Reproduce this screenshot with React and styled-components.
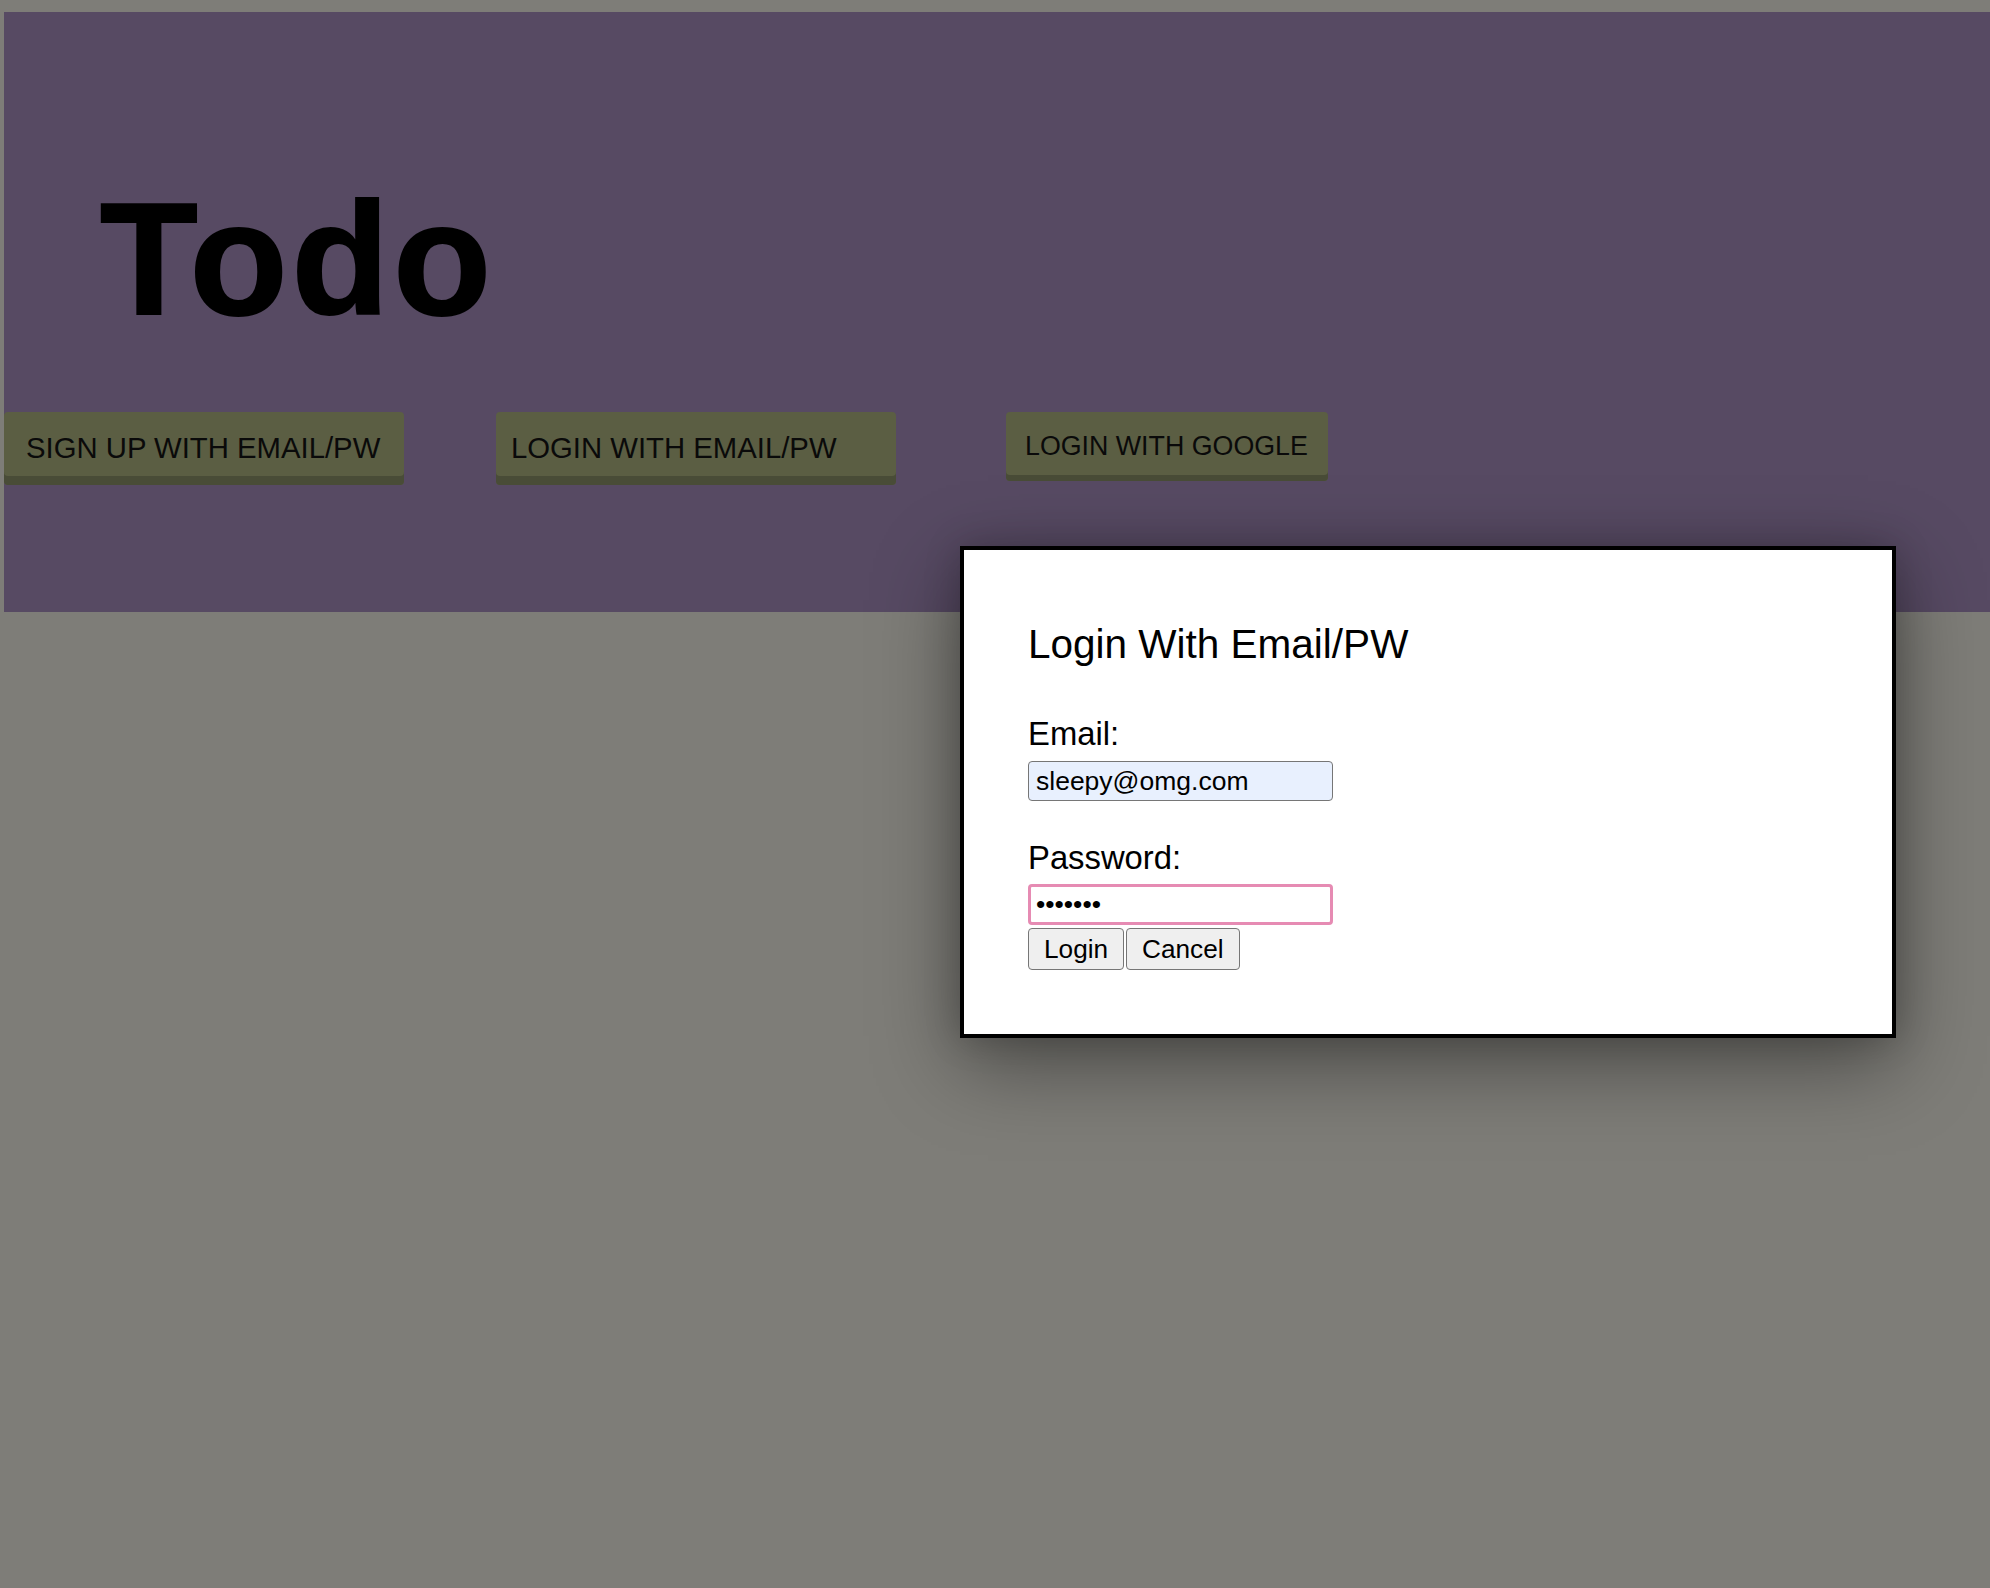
import React from "react";
import styled, { createGlobalStyle } from "styled-components";

const GlobalStyle = createGlobalStyle`
  html, body {
    margin: 0;
    padding: 0;
    background: #7e7d78;
    font-family: "Liberation Sans", Arial, sans-serif;
  }
  #root {
    min-height: 1588px;
  }
`;

const Page = styled.div`
  position: relative;
  min-height: 1588px;
  padding: 12px 0 0 4px;
  box-sizing: border-box;
  background: #7e7d78;
`;

const Header = styled.header`
  background: #574a63;
  height: 600px;
  box-sizing: border-box;
  padding-top: 155px;
  display: flex;
  flex-direction: column;
`;

const Title = styled.h1`
  margin: 0 0 0 96px;
  font-family: "Liberation Sans", Arial, sans-serif;
  font-weight: 700;
  font-size: 160px;
  line-height: 184px;
  letter-spacing: 4px;
  -webkit-text-stroke: 2px #000;
  color: #000;
`;

const ButtonRow = styled.div`
  display: flex;
  align-items: flex-start;
  gap: 92px;
  margin-top: 61px;
`;

const HeaderButton = styled.button`
  box-sizing: border-box;
  width: ${(p) => p.$width}px;
  height: ${(p) => p.$height}px;
  margin-left: ${(p) => p.$offset || 0}px;
  padding: ${(p) => p.$padTop}px 0 ${(p) => p.$lip}px ${(p) => p.$padLeft}px;
  border: none;
  border-radius: 4px;
  background: #5b5e43;
  box-shadow: inset 0 -${(p) => p.$lip}px 0 #494c37;
  font-family: "Liberation Sans", Arial, sans-serif;
  font-size: ${(p) => p.$size}px;
  line-height: ${(p) => p.$size}px;
  text-align: left;
  color: #0a0a0a;
  cursor: pointer;
  display: flex;
  align-items: center;
  white-space: nowrap;
`;

const Modal = styled.div`
  position: absolute;
  left: 960px;
  top: 546px;
  width: 936px;
  box-sizing: border-box;
  background: #fff;
  border: 4px solid #000;
  padding: 71px 64px 64px 64px;
  box-shadow: 0 26px 80px rgba(0, 0, 0, 0.42), 0 0 34px rgba(0, 0, 0, 0.18);
  display: flex;
  flex-direction: column;
  align-items: flex-start;
`;

const ModalTitle = styled.h2`
  margin: 0;
  font-family: "Liberation Sans", Arial, sans-serif;
  font-weight: 400;
  font-size: 40.5px;
  line-height: 46px;
  color: #000;
`;

const Label = styled.label`
  display: block;
  margin-top: ${(p) => p.$top}px;
  font-size: 32.8px;
  line-height: 37px;
  color: #000;
`;

const TextInput = styled.input`
  box-sizing: border-box;
  display: block;
  width: 305px;
  height: ${(p) => (p.$focused ? 41 : 40)}px;
  margin-top: ${(p) => p.$top}px;
  padding: 0 0 0 ${(p) => (p.$focused ? 5 : 7)}px;
  border: ${(p) => (p.$focused ? "3px solid #e68bb3" : "1.5px solid #767676")};
  border-radius: 4px;
  background: ${(p) => (p.$focused ? "#fff" : "#e8f0fe")};
  font-family: "Liberation Sans", Arial, sans-serif;
  font-size: 26.5px;
  color: #000;
  outline: none;
`;

const Actions = styled.div`
  display: flex;
  gap: 2px;
  margin-top: 3px;
`;

const FormButton = styled.button`
  box-sizing: border-box;
  height: 42px;
  padding: 0 15px;
  border: 1.5px solid #767676;
  border-radius: 4px;
  background: #efefef;
  font-family: "Liberation Sans", Arial, sans-serif;
  font-size: 26.2px;
  line-height: 1;
  color: #000;
  cursor: pointer;
`;

export default function App() {
  return (
    <>
      <GlobalStyle />
      <Page>
        <Header>
          <Title>Todo</Title>
          <ButtonRow>
            <HeaderButton $width={400} $height={73} $padTop={8} $padLeft={22} $size={29.3} $lip={9}>
              SIGN UP WITH EMAIL/PW
            </HeaderButton>
            <HeaderButton $width={400} $height={73} $padTop={8} $padLeft={15} $size={29.3} $lip={9}>
              LOGIN WITH EMAIL/PW
            </HeaderButton>
            <HeaderButton
              $width={322}
              $height={69}
              $padTop={6}
              $padLeft={19}
              $size={26.8}
              $lip={6}
              $offset={18}
            >
              LOGIN WITH GOOGLE
            </HeaderButton>
          </ButtonRow>
        </Header>
        <Modal>
          <ModalTitle>Login With Email/PW</ModalTitle>
          <Label $top={48} htmlFor="email">Email:</Label>
          <TextInput id="email" type="email" $top={9} defaultValue="sleepy@omg.com" />
          <Label $top={38} htmlFor="pw">Password:</Label>
          <TextInput id="pw" type="password" $top={8} $focused defaultValue="sleepy1" />
          <Actions>
            <FormButton>Login</FormButton>
            <FormButton>Cancel</FormButton>
          </Actions>
        </Modal>
      </Page>
    </>
  );
}
